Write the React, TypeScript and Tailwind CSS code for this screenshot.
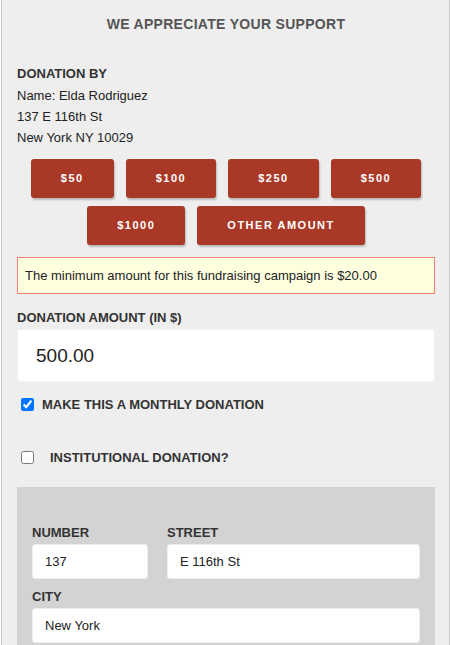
import React, { useState } from 'react';

const presets = ['$50', '$100', '$250', '$500', '$1000', 'Other Amount'];

export default function App() {
  const [amount, setAmount] = useState('500.00');
  const [monthly, setMonthly] = useState(true);
  const [institutional, setInstitutional] = useState(false);

  return (
    <div className="min-h-screen bg-white px-[1px] font-['Liberation_Sans',Arial,sans-serif] text-[#222]">
      <div className="min-h-[645px] border-x border-[#cccccc] bg-[#eeeeee] pl-[15px] pr-[14px]">
        <h2 className="pt-[14px] text-center text-[14px] font-bold leading-5 tracking-[0.3px] text-[#555]">
          WE APPRECIATE YOUR SUPPORT
        </h2>

        {/* donor details */}
        <div className="mt-[30px]">
          <div className="text-[13px] font-bold leading-5 text-[#333]">DONATION BY</div>
          <div className="mt-[1px] text-[13px] leading-[21px]">
            <div>Name: Elda Rodriguez</div>
            <div>137 E 116th St</div>
            <div>New York NY 10029</div>
          </div>
        </div>

        {/* preset amounts */}
        <div className="mt-[11px] flex flex-wrap justify-center gap-x-[12px] gap-y-[8px]">
          {presets.map((p) => (
            <button
              key={p}
              onClick={() => p !== 'Other Amount' && setAmount(p.slice(1) + '.00')}
              className="h-[39px] rounded-[3px] bg-[#a93826] px-[30px] text-[11px] font-bold uppercase tracking-[1.5px] text-white shadow-[1px_2px_2px_rgba(0,0,0,0.22)]"
            >
              {p}
            </button>
          ))}
        </div>

        <div className="mt-[12px] flex h-[37px] items-center border border-[#f08070] bg-[#ffffe0] px-[7px] text-[13px] text-[#222]">
          The minimum amount for this fundraising campaign is $20.00
        </div>

        <label className="mt-[14px] block text-[13px] font-bold leading-5 text-[#333]">
          DONATION AMOUNT (IN $)
        </label>
        <input
          value={amount}
          onChange={(e) => setAmount(e.target.value)}
          className="mt-[1px] block h-[53px] w-full rounded-[3px] border border-[#f2f2f2] bg-white px-[18px] text-[19px] text-[#222] outline-none"
        />

        <label className="mt-[13px] flex items-center text-[13px] font-bold text-[#333]">
          <input
            type="checkbox"
            checked={monthly}
            onChange={(e) => setMonthly(e.target.checked)}
            className="ml-[4px] mr-[8px] h-[13px] w-[13px]"
          />
          MAKE THIS A MONTHLY DONATION
        </label>

        <label className="mt-[33px] flex items-center text-[13px] font-bold text-[#333]">
          <input
            type="checkbox"
            checked={institutional}
            onChange={(e) => setInstitutional(e.target.checked)}
            className="ml-[4px] mr-[16px] h-[13px] w-[13px]"
          />
          INSTITUTIONAL DONATION?
        </label>

        {/* address panel */}
        <div className="mt-[20px] bg-[#d3d3d3] px-[15px] pb-4 pt-[36px]">
          <div className="flex gap-[19px]">
            <div className="w-[116px]">
              <div className="text-[13px] font-bold leading-5 text-[#333]">NUMBER</div>
              <input
                defaultValue="137"
                className="mt-[1px] block h-[35px] w-full rounded-[3px] border border-[#eeeeee] bg-white px-3 text-[13px] text-[#222] outline-none"
              />
            </div>
            <div className="flex-1">
              <div className="text-[13px] font-bold leading-5 text-[#333]">STREET</div>
              <input
                defaultValue="E 116th St"
                className="mt-[1px] block h-[35px] w-full rounded-[3px] border border-[#eeeeee] bg-white px-3 text-[13px] text-[#222] outline-none"
              />
            </div>
          </div>
          <div className="mt-[8px] text-[13px] font-bold leading-5 text-[#333]">CITY</div>
          <input
            defaultValue="New York"
            className="mt-[1px] block h-[35px] w-full rounded-[3px] border border-[#eeeeee] bg-white px-3 text-[13px] text-[#222] outline-none"
          />
        </div>
      </div>
    </div>
  );
}
